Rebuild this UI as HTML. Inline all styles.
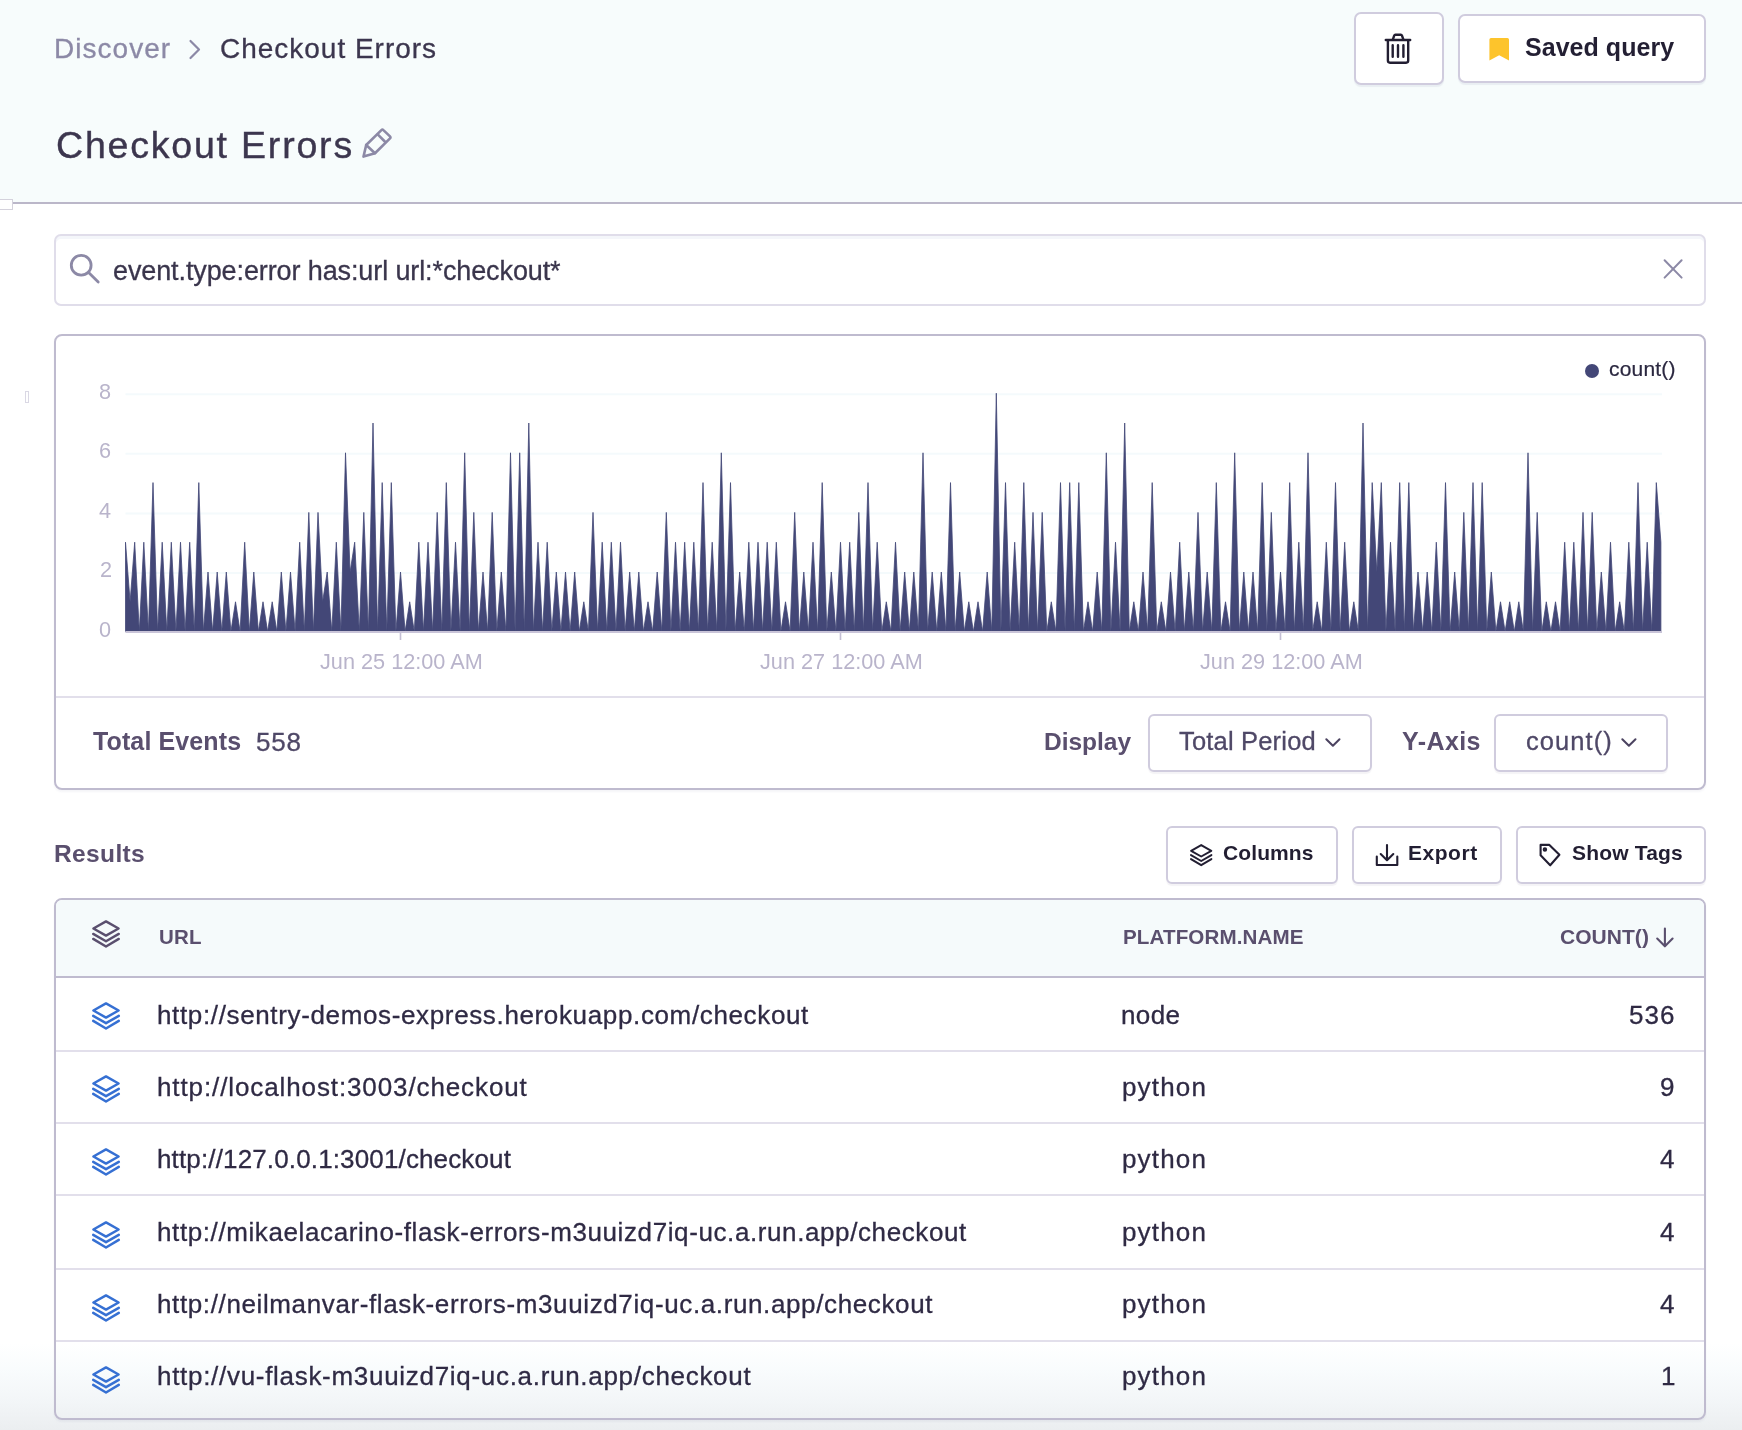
<!DOCTYPE html>
<html lang="en"><head><meta charset="utf-8"><title>Checkout Errors - Discover</title>
<style>
html,body{margin:0;padding:0;background:#fff;}
body{width:1742px;height:1430px;position:relative;overflow:hidden;font-family:'Liberation Sans', sans-serif;}
.t{will-change:transform;position:absolute;white-space:pre;line-height:1;font-family:'Liberation Sans', sans-serif;}
.b{position:absolute;}
svg{overflow:visible;}
</style></head><body>
<div class="b" style="left:0px;top:0px;width:1742px;height:202px;background:#f7fcfc;"></div>
<div class="b" style="left:0px;top:202px;width:1742px;height:2px;background:#bbb7c9;"></div>
<div class="b" style="left:-2px;top:199px;width:15px;height:11px;background:#fff;border:1px solid #d4d2dc;box-sizing:border-box;"></div>
<div class="b" style="left:25px;top:391px;width:4px;height:12px;background:#fff;border:1px solid #dad8e4;box-sizing:border-box;"></div>
<span class="t" style="left:53.70px;top:35.00px;font-size:28px;color:#8c89a6;font-weight:400;letter-spacing:1.031px;-webkit-text-stroke:0.3px #8c89a6;">Discover</span>
<svg class="b" style="left:186px;top:36px" width="18" height="26"><path d="M4.5,5 L13,13.5 L4.5,22" fill="none" stroke="#8c89a6" stroke-width="2.2" stroke-linecap="round" stroke-linejoin="round"/></svg>
<span class="t" style="left:220.30px;top:35.00px;font-size:28px;color:#3c364e;font-weight:400;letter-spacing:0.986px;-webkit-text-stroke:0.3px #3c364e;">Checkout Errors</span>
<span class="t" style="left:56.40px;top:127.00px;font-size:37.5px;color:#3c364e;font-weight:400;letter-spacing:1.802px;-webkit-text-stroke:0.4px #3c364e;">Checkout Errors</span>
<svg class="b" style="left:355px;top:120px" width="44" height="44" viewBox="355 120 44 44"><g fill="none" stroke="#8c89a6" stroke-width="2.6" stroke-linejoin="round" stroke-linecap="round"><path d="M363.5,156.6 L366.2,145 L381.4,130.1 Q382.4,129.1 383.4,130.1 L390,136.4 Q391,137.4 390,138.4 L375,153.2 Z"/><path d="M366.2,145 L375,153.2 M377.7,134.4 L384.8,141.5"/></g></svg>
<div class="b" style="left:1354px;top:12px;width:90px;height:73px;background:#fff;border:2px solid #d0ccde;border-radius:7px;box-sizing:border-box;box-shadow:0 2px 1px rgba(60,50,110,0.07);"></div>
<svg class="b" style="left:1380px;top:28px" width="36" height="40" viewBox="1380 28 36 40"><g fill="none" stroke="#221e32" stroke-width="2.4" stroke-linecap="round" stroke-linejoin="round"><path d="M1385.8,40 H1410.2"/><path d="M1392.9,39.4 L1394.2,35.6 Q1394.5,34.8 1395.4,34.8 H1400.8 Q1401.7,34.8 1402,35.6 L1403.3,39.4"/><path d="M1387.9,40.5 V60.6 Q1387.9,62.7 1390,62.7 H1406.1 Q1408.2,62.7 1408.2,60.6 V40.5"/><path d="M1392.7,45.3 V56.8 M1398,45.3 V56.8 M1403.4,45.3 V56.8"/></g></svg>
<div class="b" style="left:1458px;top:14px;width:248px;height:69px;background:#fff;border:2px solid #d0ccde;border-radius:7px;box-sizing:border-box;box-shadow:0 2px 1px rgba(60,50,110,0.07);"></div>
<svg class="b" style="left:1486px;top:34px" width="28" height="30" viewBox="1486 34 28 30"><path d="M1489.4,39.6 Q1489.4,38 1491,38 H1507.4 Q1509,38 1509,39.6 V60.4 L1499.2,55.2 L1489.4,60.4 Z" fill="#fdc42c"/></svg>
<span class="t" style="left:1525.00px;top:35.00px;font-size:25px;color:#231f33;font-weight:700;letter-spacing:0.042px;">Saved query</span>
<div class="b" style="left:54px;top:234px;width:1652px;height:71.5px;background:#fff;border:2px solid #e0ddea;border-radius:7px;box-sizing:border-box;box-shadow:inset 0 3px 0 #f4f6fa;"></div>
<svg class="b" style="left:66px;top:250px" width="40" height="40" viewBox="66 250 40 40"><g fill="none" stroke="#8c89a6" stroke-width="2.8" stroke-linecap="round"><circle cx="81.2" cy="265.3" r="9.9"/><path d="M88.6,272.6 L98.2,282"/></g></svg>
<span class="t" style="left:113.40px;top:258.00px;font-size:27px;color:#3a354c;font-weight:400;letter-spacing:-0.108px;-webkit-text-stroke:0.3px #3a354c;">event.type:error has:url url:*checkout*</span>
<svg class="b" style="left:1660px;top:256px" width="26" height="26" viewBox="1660 256 26 26"><path d="M1664.6,260.2 L1681.6,277.6 M1681.6,260.2 L1664.6,277.6" fill="none" stroke="#8c89a6" stroke-width="2" stroke-linecap="round"/></svg>
<div class="b" style="left:54px;top:334px;width:1652px;height:456px;background:#fff;border:2px solid #bfbbcf;border-radius:8px;box-sizing:border-box;box-shadow:0 2px 2px rgba(60,50,110,0.05);"></div>
<div class="b" style="left:56px;top:696px;width:1648px;height:2px;background:#e2dfeb;"></div>
<svg class="b" style="left:56px;top:336px" width="1648" height="360" viewBox="56 336 1648 360"><path d="M125.5,573.0 H1662" stroke="#f4fafc" stroke-width="2" fill="none"/><path d="M125.5,513.4 H1662" stroke="#f4fafc" stroke-width="2" fill="none"/><path d="M125.5,453.8 H1662" stroke="#f4fafc" stroke-width="2" fill="none"/><path d="M125.5,394.2 H1662" stroke="#f4fafc" stroke-width="2" fill="none"/><path d="M125.5,631.6 L125.5,542.2 L130.1,601.8 L134.7,542.2 L139.3,631.6 L143.8,542.2 L148.4,631.6 L153.0,482.6 L157.6,631.6 L162.2,542.2 L166.8,631.6 L171.3,542.2 L175.9,631.6 L180.5,542.2 L185.1,631.6 L189.7,542.2 L194.3,631.6 L198.8,482.6 L203.4,631.6 L208.0,572.0 L212.6,631.6 L217.2,572.0 L221.8,631.6 L226.3,572.0 L230.9,631.6 L235.5,601.8 L240.1,631.6 L244.7,542.2 L249.3,631.6 L253.8,572.0 L258.4,631.6 L263.0,601.8 L267.6,631.6 L272.2,601.8 L276.8,631.6 L281.3,572.0 L285.9,631.6 L290.5,572.0 L295.1,631.6 L299.7,542.2 L304.3,631.6 L308.8,512.4 L313.4,631.6 L318.0,512.4 L322.6,601.8 L327.2,572.0 L331.8,631.6 L336.3,542.2 L340.9,631.6 L345.5,452.8 L350.1,572.0 L354.7,542.2 L359.3,631.6 L363.8,512.4 L368.4,631.6 L373.0,423.0 L377.6,631.6 L382.2,482.6 L386.8,631.6 L391.3,482.6 L395.9,631.6 L400.5,572.0 L405.1,631.6 L409.7,601.8 L414.3,631.6 L418.8,542.2 L423.4,631.6 L428.0,542.2 L432.6,631.6 L437.2,512.4 L441.8,631.6 L446.3,482.6 L450.9,631.6 L455.5,542.2 L460.1,631.6 L464.7,452.8 L469.3,631.6 L473.8,512.4 L478.4,631.6 L483.0,572.0 L487.6,631.6 L492.2,512.4 L496.8,631.6 L501.3,572.0 L505.9,631.6 L510.5,452.8 L515.1,631.6 L519.7,452.8 L524.3,631.6 L528.8,423.0 L533.4,631.6 L538.0,542.2 L542.6,631.6 L547.2,542.2 L551.8,631.6 L556.3,572.0 L560.9,631.6 L565.5,572.0 L570.1,631.6 L574.7,572.0 L579.3,631.6 L583.8,601.8 L588.4,631.6 L593.0,512.4 L597.6,631.6 L602.2,542.2 L606.8,631.6 L611.3,542.2 L615.9,631.6 L620.5,542.2 L625.1,631.6 L629.7,572.0 L634.3,631.6 L638.8,572.0 L643.4,631.6 L648.0,601.8 L652.6,631.6 L657.2,572.0 L661.8,631.6 L666.3,512.4 L670.9,631.6 L675.5,542.2 L680.1,631.6 L684.7,542.2 L689.3,631.6 L693.8,542.2 L698.4,631.6 L703.0,482.6 L707.6,631.6 L712.2,542.2 L716.8,631.6 L721.3,452.8 L725.9,631.6 L730.5,482.6 L735.1,631.6 L739.7,572.0 L744.3,631.6 L748.8,542.2 L753.4,631.6 L758.0,542.2 L762.6,631.6 L767.2,542.2 L771.8,631.6 L776.3,542.2 L780.9,631.6 L785.5,601.8 L790.1,631.6 L794.7,512.4 L799.3,631.6 L803.8,572.0 L808.4,631.6 L813.0,542.2 L817.6,631.6 L822.2,482.6 L826.8,631.6 L831.3,572.0 L835.9,631.6 L840.5,542.2 L845.1,631.6 L849.7,542.2 L854.3,631.6 L858.8,512.4 L863.4,631.6 L868.0,482.6 L872.6,631.6 L877.2,542.2 L881.8,631.6 L886.3,601.8 L890.9,631.6 L895.5,542.2 L900.1,631.6 L904.7,572.0 L909.3,631.6 L913.8,572.0 L918.4,631.6 L923.0,452.8 L927.6,631.6 L932.2,572.0 L936.8,631.6 L941.3,572.0 L945.9,631.6 L950.5,482.6 L955.1,631.6 L959.7,572.0 L964.3,631.6 L968.8,601.8 L973.4,631.6 L978.0,601.8 L982.6,631.6 L987.2,572.0 L991.8,631.6 L996.3,393.2 L1000.9,631.6 L1005.5,482.6 L1010.1,631.6 L1014.7,542.2 L1019.3,631.6 L1023.8,482.6 L1028.4,631.6 L1033.0,512.4 L1037.6,631.6 L1042.2,512.4 L1046.8,631.6 L1051.3,601.8 L1055.9,631.6 L1060.5,482.6 L1065.1,631.6 L1069.7,482.6 L1074.3,631.6 L1078.8,482.6 L1083.4,631.6 L1088.0,601.8 L1092.6,631.6 L1097.2,572.0 L1101.8,631.6 L1106.3,452.8 L1110.9,631.6 L1115.5,542.2 L1120.1,631.6 L1124.7,423.0 L1129.3,631.6 L1133.8,601.8 L1138.4,631.6 L1143.0,572.0 L1147.6,631.6 L1152.2,482.6 L1156.8,631.6 L1161.3,601.8 L1165.9,631.6 L1170.5,572.0 L1175.1,631.6 L1179.7,542.2 L1184.3,631.6 L1188.8,572.0 L1193.4,631.6 L1198.0,512.4 L1202.6,631.6 L1207.2,572.0 L1211.8,631.6 L1216.3,482.6 L1220.9,631.6 L1225.5,601.8 L1230.1,631.6 L1234.7,452.8 L1239.3,631.6 L1243.8,572.0 L1248.4,631.6 L1253.0,572.0 L1257.6,631.6 L1262.2,482.6 L1266.8,631.6 L1271.3,512.4 L1275.9,631.6 L1280.5,572.0 L1285.1,631.6 L1289.7,482.6 L1294.3,631.6 L1298.8,542.2 L1303.4,631.6 L1308.0,452.8 L1312.6,631.6 L1317.2,601.8 L1321.8,631.6 L1326.3,542.2 L1330.9,631.6 L1335.5,482.6 L1340.1,631.6 L1344.7,542.2 L1349.3,631.6 L1353.8,601.8 L1358.4,631.6 L1363.0,423.0 L1367.6,631.6 L1372.2,482.6 L1376.8,572.0 L1381.3,482.6 L1385.9,631.6 L1390.5,542.2 L1395.1,631.6 L1399.7,482.6 L1404.3,631.6 L1408.8,482.6 L1413.4,631.6 L1418.0,572.0 L1422.6,631.6 L1427.2,572.0 L1431.8,631.6 L1436.3,542.2 L1440.9,631.6 L1445.5,482.6 L1450.1,631.6 L1454.7,572.0 L1459.3,631.6 L1463.8,512.4 L1468.4,631.6 L1473.0,482.6 L1477.6,631.6 L1482.2,482.6 L1486.8,631.6 L1491.3,572.0 L1495.9,631.6 L1500.5,601.8 L1505.1,631.6 L1509.7,601.8 L1514.3,631.6 L1518.8,601.8 L1523.4,631.6 L1528.0,452.8 L1532.6,631.6 L1537.2,512.4 L1541.8,631.6 L1546.3,601.8 L1550.9,631.6 L1555.5,601.8 L1560.1,631.6 L1564.7,542.2 L1569.3,631.6 L1573.8,542.2 L1578.4,631.6 L1583.0,512.4 L1587.6,631.6 L1592.2,512.4 L1596.8,631.6 L1601.3,572.0 L1605.9,631.6 L1610.5,542.2 L1615.1,631.6 L1619.7,601.8 L1624.3,631.6 L1628.8,542.2 L1633.4,631.6 L1638.0,482.6 L1642.6,631.6 L1647.2,542.2 L1651.8,631.6 L1656.3,482.6 L1660.9,542.2 L1660.9,631.6 Z" fill="#434777" stroke="#434777" stroke-width="0.8" stroke-linejoin="miter"/><path d="M125.5,632 H1662" stroke="#c9c4d8" stroke-width="2" fill="none"/><path d="M400.5,633 V640" stroke="#c4bfd4" stroke-width="1.6" fill="none"/><path d="M840.5,633 V640" stroke="#c4bfd4" stroke-width="1.6" fill="none"/><path d="M1280.5,633 V640" stroke="#c4bfd4" stroke-width="1.6" fill="none"/></svg>
<span class="t" style="left:98.80px;top:619.00px;font-size:21.7px;color:#b9b4cb;font-weight:400;">0</span>
<span class="t" style="left:99.80px;top:559.00px;font-size:21.7px;color:#b9b4cb;font-weight:400;">2</span>
<span class="t" style="left:98.80px;top:500.00px;font-size:21.7px;color:#b9b4cb;font-weight:400;">4</span>
<span class="t" style="left:98.80px;top:440.00px;font-size:21.7px;color:#b9b4cb;font-weight:400;">6</span>
<span class="t" style="left:98.80px;top:381.00px;font-size:21.7px;color:#b9b4cb;font-weight:400;">8</span>
<span class="t" style="left:319.52px;top:651.00px;font-size:21.7px;color:#b9b4cb;font-weight:400;">Jun 25 12:00 AM</span>
<span class="t" style="left:759.52px;top:651.00px;font-size:21.7px;color:#b9b4cb;font-weight:400;">Jun 27 12:00 AM</span>
<span class="t" style="left:1199.52px;top:651.00px;font-size:21.7px;color:#b9b4cb;font-weight:400;">Jun 29 12:00 AM</span>
<div class="b" style="left:1584.5px;top:363.5px;width:14.5px;height:14.5px;background:#434777;border-radius:50%;"></div>
<span class="t" style="left:1608.90px;top:358.00px;font-size:21px;color:#2b2840;font-weight:400;letter-spacing:0.189px;-webkit-text-stroke:0.2px #2b2840;">count()</span>
<span class="t" style="left:92.90px;top:729.00px;font-size:25px;color:#5a4f6e;font-weight:700;letter-spacing:0.119px;">Total Events</span>
<span class="t" style="left:255.70px;top:729.00px;font-size:26px;color:#4f4867;font-weight:400;letter-spacing:0.840px;-webkit-text-stroke:0.3px #4f4867;">558</span>
<span class="t" style="left:1044.30px;top:730.00px;font-size:24.5px;color:#5a4f6e;font-weight:700;letter-spacing:-0.021px;">Display</span>
<div class="b" style="left:1148px;top:714px;width:224px;height:58px;background:#fff;border:2px solid #d0ccde;border-radius:6px;box-sizing:border-box;box-shadow:0 2px 1px rgba(60,50,110,0.06);"></div>
<span class="t" style="left:1178.70px;top:729.00px;font-size:25.5px;color:#4f4867;font-weight:400;letter-spacing:0.184px;-webkit-text-stroke:0.3px #4f4867;">Total Period</span>
<svg class="b" style="left:1322px;top:732px" width="24" height="22"><path d="M4.3,7.2 L10.9,13.8 L17.5,7.2" fill="none" stroke="#4b4360" stroke-width="2" stroke-linecap="round" stroke-linejoin="round"/></svg>
<span class="t" style="left:1401.70px;top:729.00px;font-size:25px;color:#5a4f6e;font-weight:700;letter-spacing:0.415px;">Y-Axis</span>
<div class="b" style="left:1494px;top:714px;width:174px;height:58px;background:#fff;border:2px solid #d0ccde;border-radius:6px;box-sizing:border-box;box-shadow:0 2px 1px rgba(60,50,110,0.06);"></div>
<span class="t" style="left:1525.60px;top:729.00px;font-size:25.5px;color:#4f4867;font-weight:400;letter-spacing:1.055px;-webkit-text-stroke:0.3px #4f4867;">count()</span>
<svg class="b" style="left:1618px;top:732px" width="24" height="22"><path d="M4.3,7.2 L10.9,13.8 L17.5,7.2" fill="none" stroke="#4b4360" stroke-width="2" stroke-linecap="round" stroke-linejoin="round"/></svg>
<span class="t" style="left:54.40px;top:842.00px;font-size:24.5px;color:#5a4f6e;font-weight:700;letter-spacing:0.371px;">Results</span>
<div class="b" style="left:1166px;top:826px;width:172px;height:58px;background:#fff;border:2px solid #d0ccde;border-radius:6px;box-sizing:border-box;box-shadow:0 2px 1px rgba(60,50,110,0.06);"></div>
<div class="b" style="left:1352px;top:826px;width:150px;height:58px;background:#fff;border:2px solid #d0ccde;border-radius:6px;box-sizing:border-box;box-shadow:0 2px 1px rgba(60,50,110,0.06);"></div>
<div class="b" style="left:1516px;top:826px;width:190px;height:58px;background:#fff;border:2px solid #d0ccde;border-radius:6px;box-sizing:border-box;box-shadow:0 2px 1px rgba(60,50,110,0.06);"></div>
<svg class="b" style="left:1190px;top:843.5px" width="24" height="24"><g fill="none" stroke="#221e32" stroke-width="2.0" stroke-linejoin="round" stroke-linecap="round"><path d="M11.2,1.1 L21.3,6.8 L11.2,12.5 L1.1,6.8 Z"/><path d="M1.0,11.1 L11.2,17.0 L21.4,11.1"/><path d="M1.0,15.1 L11.2,21.2 L21.4,15.1"/></g></svg>
<span class="t" style="left:1223.20px;top:842.00px;font-size:21px;color:#221e32;font-weight:700;letter-spacing:0.107px;">Columns</span>
<svg class="b" style="left:1372px;top:840px" width="30" height="30" viewBox="1372 840 30 30"><g fill="none" stroke="#221e32" stroke-width="2.1" stroke-linecap="round" stroke-linejoin="round"><path d="M1376.8,856.6 V865 H1397.3 V856.6"/><path d="M1387,845 V860.2 M1380.7,854 L1387,860.3 L1393.3,854"/></g></svg>
<span class="t" style="left:1408.00px;top:842.00px;font-size:21px;color:#221e32;font-weight:700;letter-spacing:0.537px;">Export</span>
<svg class="b" style="left:1536px;top:840px" width="30" height="30" viewBox="1536 840 30 30"><g fill="none" stroke="#221e32" stroke-width="2.1" stroke-linejoin="round"><path d="M1540.6,844.9 H1549.4 L1559.4,854.7 L1550.2,865.3 L1540.6,855.3 Z"/><circle cx="1544.9" cy="849.5" r="1.2"/></g></svg>
<span class="t" style="left:1572.00px;top:842.00px;font-size:21px;color:#221e32;font-weight:700;letter-spacing:0.174px;">Show Tags</span>
<div class="b" style="left:0px;top:1343px;width:1742px;height:87px;background:linear-gradient(to bottom, #ffffff 0%, #f9fcfd 30%, #f3f6f8 65%, #ebeef0 100%);"></div>
<div class="b" style="left:54px;top:898px;width:1652px;height:521.5px;background:transparent;border:2px solid #bfbbcf;border-radius:8px;box-sizing:border-box;box-shadow:0 2px 2px rgba(60,50,110,0.05);"></div>
<div class="b" style="left:56px;top:900px;width:1648px;height:76px;background:#f5fafb;border-radius:6px 6px 0 0;"></div>
<div class="b" style="left:56px;top:976px;width:1648px;height:2px;background:#bfbbcf;"></div>
<svg class="b" style="left:92px;top:920px" width="30" height="30"><g fill="none" stroke="#5a4f6e" stroke-width="2.4" stroke-linejoin="round" stroke-linecap="round"><path d="M14.0,1.4 L26.6,8.5 L14.0,15.6 L1.4,8.5 Z"/><path d="M1.2,13.9 L14.0,21.2 L26.8,13.9"/><path d="M1.2,18.9 L14.0,26.5 L26.8,18.9"/></g></svg>
<span class="t" style="left:159.20px;top:927.00px;font-size:20.5px;color:#5a4f6e;font-weight:700;letter-spacing:0.196px;">URL</span>
<span class="t" style="left:1123.20px;top:927.00px;font-size:20.6px;color:#5a4f6e;font-weight:700;letter-spacing:0.101px;">PLATFORM.NAME</span>
<span class="t" style="left:1560.20px;top:926.00px;font-size:21px;color:#5a4f6e;font-weight:700;letter-spacing:0.041px;">COUNT()</span>
<svg class="b" style="left:1652px;top:922px" width="26" height="30" viewBox="1652 922 26 30"><g fill="none" stroke="#5a4f6e" stroke-width="2.1" stroke-linecap="round" stroke-linejoin="round"><path d="M1664.9,928.6 V946 M1657.2,938.6 L1664.9,946.3 L1672.6,938.6"/></g></svg>
<div class="b" style="left:56px;top:1050px;width:1648px;height:2px;background:#e2dfeb;"></div>
<div class="b" style="left:56px;top:1122px;width:1648px;height:2px;background:#e2dfeb;"></div>
<div class="b" style="left:56px;top:1194px;width:1648px;height:2px;background:#e2dfeb;"></div>
<div class="b" style="left:56px;top:1268px;width:1648px;height:2px;background:#e2dfeb;"></div>
<div class="b" style="left:56px;top:1340px;width:1648px;height:2px;background:#e2dfeb;"></div>
<svg class="b" style="left:92px;top:1001.9px" width="30" height="30"><g fill="none" stroke="#3670d3" stroke-width="2.5" stroke-linejoin="round" stroke-linecap="round"><path d="M14.0,1.4 L26.6,8.5 L14.0,15.6 L1.4,8.5 Z"/><path d="M1.2,13.9 L14.0,21.2 L26.8,13.9"/><path d="M1.2,18.9 L14.0,26.5 L26.8,18.9"/></g></svg>
<span class="t" style="left:156.60px;top:1002.00px;font-size:26px;color:#2f2a44;font-weight:400;letter-spacing:0.640px;-webkit-text-stroke:0.3px #2f2a44;">http://sentry-demos-express.herokuapp.com/checkout</span>
<span class="t" style="left:1121.40px;top:1002.00px;font-size:26px;color:#2f2a44;font-weight:400;letter-spacing:0.407px;-webkit-text-stroke:0.3px #2f2a44;">node</span>
<span class="t" style="left:1629.30px;top:1002.00px;font-size:26px;color:#2f2a44;font-weight:400;letter-spacing:1.040px;-webkit-text-stroke:0.3px #2f2a44;">536</span>
<svg class="b" style="left:92px;top:1075px" width="30" height="30"><g fill="none" stroke="#3670d3" stroke-width="2.5" stroke-linejoin="round" stroke-linecap="round"><path d="M14.0,1.4 L26.6,8.5 L14.0,15.6 L1.4,8.5 Z"/><path d="M1.2,13.9 L14.0,21.2 L26.8,13.9"/><path d="M1.2,18.9 L14.0,26.5 L26.8,18.9"/></g></svg>
<span class="t" style="left:156.60px;top:1074.00px;font-size:26px;color:#2f2a44;font-weight:400;letter-spacing:0.890px;-webkit-text-stroke:0.3px #2f2a44;">http://localhost:3003/checkout</span>
<span class="t" style="left:1121.90px;top:1074.00px;font-size:26px;color:#2f2a44;font-weight:400;letter-spacing:1.159px;-webkit-text-stroke:0.3px #2f2a44;">python</span>
<span class="t" style="left:1660.30px;top:1074.00px;font-size:26px;color:#2f2a44;font-weight:400;-webkit-text-stroke:0.3px #2f2a44;">9</span>
<svg class="b" style="left:92px;top:1148px" width="30" height="30"><g fill="none" stroke="#3670d3" stroke-width="2.5" stroke-linejoin="round" stroke-linecap="round"><path d="M14.0,1.4 L26.6,8.5 L14.0,15.6 L1.4,8.5 Z"/><path d="M1.2,13.9 L14.0,21.2 L26.8,13.9"/><path d="M1.2,18.9 L14.0,26.5 L26.8,18.9"/></g></svg>
<span class="t" style="left:156.60px;top:1146.00px;font-size:26px;color:#2f2a44;font-weight:400;letter-spacing:0.142px;-webkit-text-stroke:0.3px #2f2a44;">http://127.0.0.1:3001/checkout</span>
<span class="t" style="left:1121.90px;top:1146.00px;font-size:26px;color:#2f2a44;font-weight:400;letter-spacing:1.159px;-webkit-text-stroke:0.3px #2f2a44;">python</span>
<span class="t" style="left:1660.30px;top:1146.00px;font-size:26px;color:#2f2a44;font-weight:400;-webkit-text-stroke:0.3px #2f2a44;">4</span>
<svg class="b" style="left:92px;top:1221px" width="30" height="30"><g fill="none" stroke="#3670d3" stroke-width="2.5" stroke-linejoin="round" stroke-linecap="round"><path d="M14.0,1.4 L26.6,8.5 L14.0,15.6 L1.4,8.5 Z"/><path d="M1.2,13.9 L14.0,21.2 L26.8,13.9"/><path d="M1.2,18.9 L14.0,26.5 L26.8,18.9"/></g></svg>
<span class="t" style="left:156.60px;top:1219.00px;font-size:26px;color:#2f2a44;font-weight:400;letter-spacing:0.600px;-webkit-text-stroke:0.3px #2f2a44;">http://mikaelacarino-flask-errors-m3uuizd7iq-uc.a.run.app/checkout</span>
<span class="t" style="left:1121.90px;top:1219.00px;font-size:26px;color:#2f2a44;font-weight:400;letter-spacing:1.159px;-webkit-text-stroke:0.3px #2f2a44;">python</span>
<span class="t" style="left:1660.30px;top:1219.00px;font-size:26px;color:#2f2a44;font-weight:400;-webkit-text-stroke:0.3px #2f2a44;">4</span>
<svg class="b" style="left:92px;top:1293.9px" width="30" height="30"><g fill="none" stroke="#3670d3" stroke-width="2.5" stroke-linejoin="round" stroke-linecap="round"><path d="M14.0,1.4 L26.6,8.5 L14.0,15.6 L1.4,8.5 Z"/><path d="M1.2,13.9 L14.0,21.2 L26.8,13.9"/><path d="M1.2,18.9 L14.0,26.5 L26.8,18.9"/></g></svg>
<span class="t" style="left:156.60px;top:1291.00px;font-size:26px;color:#2f2a44;font-weight:400;letter-spacing:0.620px;-webkit-text-stroke:0.3px #2f2a44;">http://neilmanvar-flask-errors-m3uuizd7iq-uc.a.run.app/checkout</span>
<span class="t" style="left:1121.90px;top:1291.00px;font-size:26px;color:#2f2a44;font-weight:400;letter-spacing:1.159px;-webkit-text-stroke:0.3px #2f2a44;">python</span>
<span class="t" style="left:1660.30px;top:1291.00px;font-size:26px;color:#2f2a44;font-weight:400;-webkit-text-stroke:0.3px #2f2a44;">4</span>
<svg class="b" style="left:92px;top:1366.2px" width="30" height="30"><g fill="none" stroke="#3670d3" stroke-width="2.5" stroke-linejoin="round" stroke-linecap="round"><path d="M14.0,1.4 L26.6,8.5 L14.0,15.6 L1.4,8.5 Z"/><path d="M1.2,13.9 L14.0,21.2 L26.8,13.9"/><path d="M1.2,18.9 L14.0,26.5 L26.8,18.9"/></g></svg>
<span class="t" style="left:156.60px;top:1363.00px;font-size:26px;color:#2f2a44;font-weight:400;letter-spacing:0.700px;-webkit-text-stroke:0.3px #2f2a44;">http://vu-flask-m3uuizd7iq-uc.a.run.app/checkout</span>
<span class="t" style="left:1121.90px;top:1363.00px;font-size:26px;color:#2f2a44;font-weight:400;letter-spacing:1.159px;-webkit-text-stroke:0.3px #2f2a44;">python</span>
<span class="t" style="left:1660.80px;top:1363.00px;font-size:26px;color:#2f2a44;font-weight:400;-webkit-text-stroke:0.3px #2f2a44;">1</span>
</body></html>
